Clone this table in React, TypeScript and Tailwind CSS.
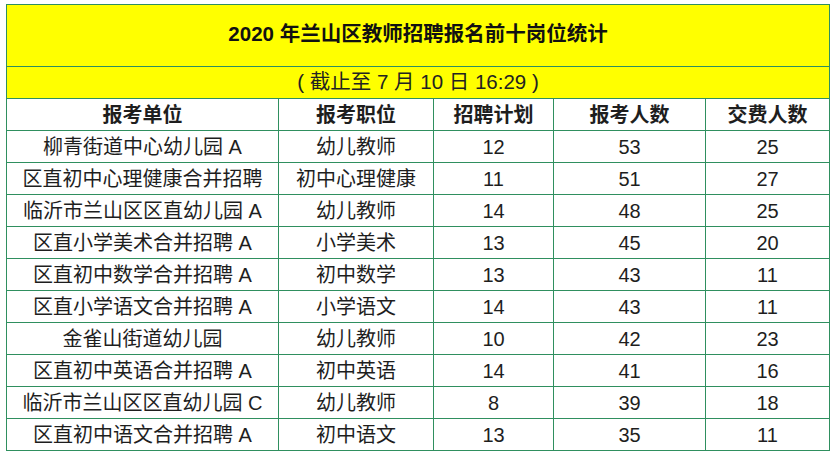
import React from "react";

const rows: [string, string, string, string, string][] = [
  ["柳青街道中心幼儿园 A", "幼儿教师", "12", "53", "25"],
  ["区直初中心理健康合并招聘", "初中心理健康", "11", "51", "27"],
  ["临沂市兰山区区直幼儿园 A", "幼儿教师", "14", "48", "25"],
  ["区直小学美术合并招聘 A", "小学美术", "13", "45", "20"],
  ["区直初中数学合并招聘 A", "初中数学", "13", "43", "11"],
  ["区直小学语文合并招聘 A", "小学语文", "14", "43", "11"],
  ["金雀山街道幼儿园", "幼儿教师", "10", "42", "23"],
  ["区直初中英语合并招聘 A", "初中英语", "14", "41", "16"],
  ["临沂市兰山区区直幼儿园 C", "幼儿教师", "8", "39", "18"],
  ["区直初中语文合并招聘 A", "初中语文", "13", "35", "11"],
];

const font = { fontFamily: '"Liberation Sans", "Noto Sans CJK SC", sans-serif' };

const cell =
  "border-r border-b border-[#2f8f5f] flex items-center justify-center h-[32px] text-[#1e1e1e] leading-none whitespace-nowrap";

export default function App() {
  return (
    <div className="w-[836px] h-[456px] bg-white pt-[4px] pl-[6px]" style={font}>
      <div className="w-[824px] border-l border-t border-[#2f8f5f] grid grid-cols-[272px_155px_120px_152px_124px]">
        <div className="col-span-5 h-[62px] bg-[#ffff00] border-r border-b border-[#2f8f5f] flex items-center justify-center text-[20.5px] font-bold text-[#111] pb-[3px]">
          2020 年兰山区教师招聘报名前十岗位统计
        </div>
        <div className="col-span-5 h-[32px] bg-[#ffff00] border-r border-b border-[#2f8f5f] flex items-center justify-center text-[20.5px] text-[#222]">
          ( 截止至 7 月 10 日 16:29 )
        </div>
        {["报考单位", "报考职位", "招聘计划", "报考人数", "交费人数"].map((h) => (
          <div key={h} className={cell + " font-bold text-[20px]"}>
            {h}
          </div>
        ))}
        {rows.map((r, i) =>
          r.map((c, j) => (
            <div key={i + "-" + j} className={cell + " text-[20px]"}>
              {c}
            </div>
          ))
        )}
      </div>
    </div>
  );
}
